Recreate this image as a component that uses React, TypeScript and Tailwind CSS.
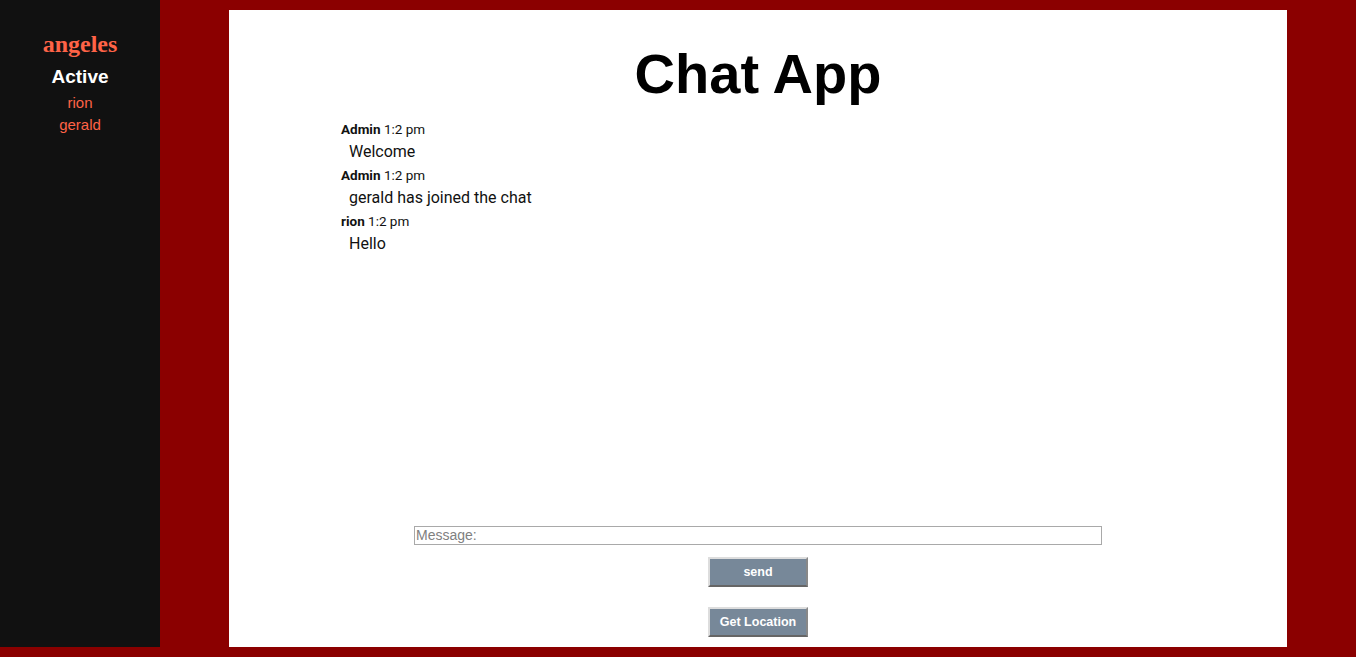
const messages = [
  { user: 'Admin', time: '1:2 pm', text: 'Welcome' },
  { user: 'Admin', time: '1:2 pm', text: 'gerald has joined the chat' },
  { user: 'rion', time: '1:2 pm', text: 'Hello' },
]

const users = ['rion', 'gerald']

export default function App() {
  return (
    <div className="flex h-[657px] bg-[#8b0000] overflow-hidden">
      <aside className="w-[160px] h-[647px] bg-[#111111] flex flex-col items-center pt-[30px] shrink-0">
        <h2 className="text-[24px] leading-[28px] font-bold text-[#ff6347] font-['Liberation_Serif',serif]">angeles</h2>
        <h3 className="mt-[7px] text-[19px] leading-[24px] font-bold text-white font-['Liberation_Sans',Arial,sans-serif]">Active</h3>
        <ul className="mt-[3px] flex flex-col items-center text-[15px] leading-[22px] text-[#ff6347] font-['Liberation_Sans',Arial,sans-serif]">
          {users.map((u) => (
            <li key={u}>{u}</li>
          ))}
        </ul>
      </aside>

      <main className="flex-1 flex justify-center pt-[10px]">
        <div className="w-[1058px] h-[637px] bg-white flex flex-col">
          <h1 className="mt-[39px] text-center text-[56px] leading-[50px] font-bold text-black font-['Liberation_Sans',Arial,sans-serif]">
            Chat App
          </h1>

          <div className="mt-[20px] pl-[112px] flex-1 font-['Roboto',sans-serif] text-[#111]">
            {messages.map((m, i) => (
              <div key={i}>
                <p className="text-[13.5px] leading-[20px]">
                  <span className="font-bold">{m.user}</span> {m.time}
                </p>
                <p className="pl-[8px] text-[16px] leading-[26px]">{m.text}</p>
              </div>
            ))}
          </div>

          <div className="flex flex-col items-center pb-[10px]">
            <input
              placeholder="Message:"
              className="w-[688px] h-[19px] border border-[#a9a9a9] px-[1px] text-[14px] font-['Liberation_Sans',Arial,sans-serif] placeholder:text-[#808080] outline-none"
            />
            <button className="mt-[12px] w-[100px] h-[30px] bg-[#778899] text-white text-[12.5px] font-bold font-['Liberation_Sans',Arial,sans-serif] border-2 border-t-[#dddddd] border-l-[#dddddd] border-b-[#666666] border-r-[#888888]">
              send
            </button>
            <button className="mt-[20px] w-[100px] h-[30px] bg-[#778899] text-white text-[12.5px] font-bold font-['Liberation_Sans',Arial,sans-serif] border-2 border-t-[#dddddd] border-l-[#dddddd] border-b-[#666666] border-r-[#888888]">
              Get Location
            </button>
          </div>
        </div>
      </main>
    </div>
  )
}
